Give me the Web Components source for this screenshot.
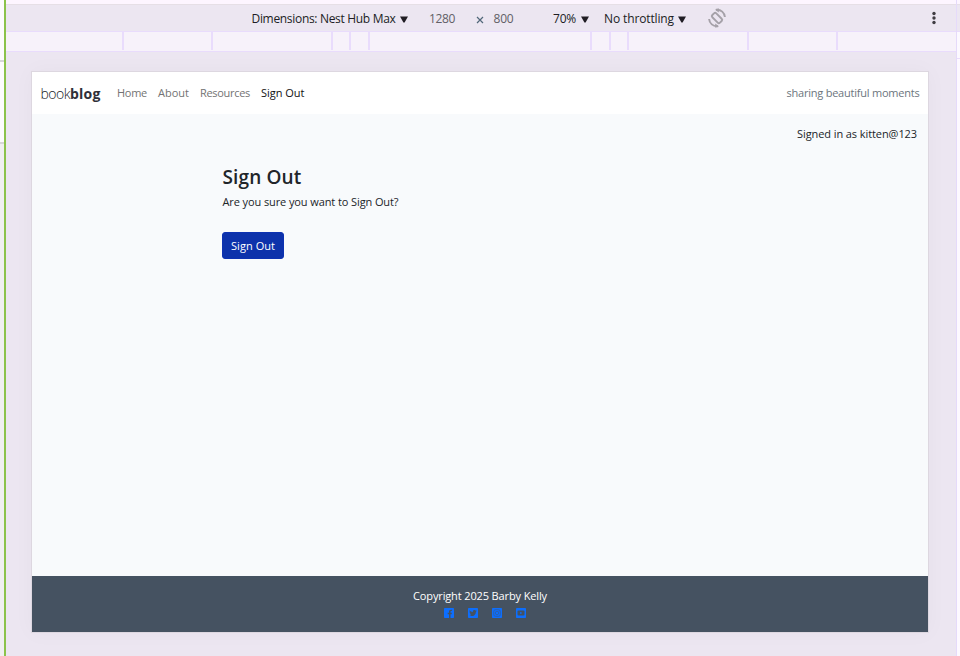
<!DOCTYPE html>
<html lang="en">
<head>
<meta charset="utf-8">
<title>Book blog</title>
<style>html,body{margin:0;height:100%;overflow:hidden}</style>
</head>
<body>
<device-preview></device-preview>
<script>
const define = (name, html, ready) => customElements.define(name, class extends HTMLElement {
  connectedCallback() {
    if (!this.shadowRoot) {
      const t = document.createElement('template');
      t.innerHTML = html;
      this.attachShadow({mode: 'open'}).append(t.content.cloneNode(true));
    }
    if (ready) ready(this);
  }
});

/* A single line of text, tracked so that it fills the width in "w". */
define('fit-text', `
<style>
:host{display:block;flex:none;white-space:nowrap;line-height:16px}
span{display:inline-block;white-space:nowrap}
</style><span><slot></slot></span>`, el => {
  const span = el.shadowRoot.querySelector('span');
  const w = +el.getAttribute('w');
  el.style.width = w + 'px';
  span.style.letterSpacing = '0px';
  const n = el.textContent.length;
  span.style.letterSpacing = ((w - span.getBoundingClientRect().width) / n) + 'px';
});

define('drop-arrow', `
<style>:host{display:block;flex:none;width:8px;height:7px;margin-top:1px}svg{display:block}</style>
<svg width="8" height="7"><path d="M0 .5h8L4.600 6.500H3.400z" fill="#201d24"/></svg>`);

define('device-toolbar', `
<style>
:host{display:flex;align-items:center;box-sizing:border-box;height:28px;padding:1px 0 0 245.500px;border:solid #e6dfe6;border-width:1px 0 0;border-bottom:1px solid #e9dcfc;background:#ece6f1;color:#201d24;font:12px "Open Sans","Noto Sans",sans-serif}
.dim{color:#625f66}
svg{flex:none;display:block}
</style>
<fit-text w="144">Dimensions: Nest Hub Max</fit-text>
<drop-arrow style="margin-left:4.500px"></drop-arrow>
<fit-text class="dim" w="26" style="margin-left:21px">1280</fit-text>
<svg width="8" height="8" style="margin:3px 0 0 21px" viewBox="0 0 8 8"><path d="M1 1l6 6M7 1L1 7" stroke="#526779" stroke-width="1.200"/></svg>
<fit-text class="dim" w="20" style="margin-left:9.500px">800</fit-text>
<fit-text w="23" style="margin-left:39.500px">70%</fit-text>
<drop-arrow style="margin-left:5px"></drop-arrow>
<fit-text w="70" style="margin-left:15px">No throttling</fit-text>
<drop-arrow style="margin-left:4px"></drop-arrow>
<svg width="20" height="20" viewBox="0 0 20 20" style="margin:-2px 0 0 21px" fill="none" stroke="#a5a1a8" stroke-width="1.900"><rect x="7.200" y="4.600" width="5.600" height="10.800" rx="1.600" transform="rotate(-45 10 10)"/><path d="M9 1.800c5-.6 8.600 3 8.900 7.200M11 18.200C6 18.800 2.400 15.200 2.100 11"/><path d="M8 1.700L11.800.2v4.400zM12 18.300L8.200 19.800v-4.400z" fill="#a5a1a8" stroke="none"/></svg>
<svg width="4" height="14" viewBox="0 0 4 14" style="margin:-1px 0 0 205px" fill="#3f3c42"><circle cx="2" cy="2.500" r="1.700"/><circle cx="2" cy="7" r="1.700"/><circle cx="2" cy="11.500" r="1.700"/></svg>`);

define('media-ruler', `
<style>
:host{display:grid;grid-template-columns:118px 89px 120px 18px 19px 222px 19px 18px 120px 89px 1fr;box-sizing:border-box;height:20px;background:#f7f2fa;border-bottom:1px solid #e9dcfc}
i{height:18px;box-sizing:border-box;border-right:2px solid #e9dcfc}
i:last-child{border:0}
</style><i></i><i></i><i></i><i></i><i></i><i></i><i></i><i></i><i></i><i></i><i></i>`);

define('side-strip', `
<style>
:host{display:grid;grid-template-rows:62px 82px 1fr;background:#fcfcfc;border-right:2px solid #8bc34a}
i{box-sizing:border-box;border-bottom:2px solid #d7d6d8}
i:last-child{background:#f0f0f0;border:0}
</style><i></i><i></i><i></i>`);

define('site-nav', `
<style>
:host{display:flex;align-items:center;height:42px;box-sizing:border-box;padding:0 8.500px 0 8.500px;background:#fff;color:#737373;font-size:11px}
.brand{display:flex;color:#212529;font-size:14px;margin:1px 16.500px 0 0}
.light{font-family:"Open Sans Light","Open Sans",sans-serif;font-weight:300}
.on{color:#111}.end{margin-left:auto;color:#6c757d}
.blog{font-weight:700;color:#303038}
</style>
<div class="brand"><fit-text class="light" w="29.500">book</fit-text><fit-text class="blog" w="30.500">blog</fit-text></div>
<fit-text w="30">Home</fit-text><fit-text w="31" style="margin-left:11px">About</fit-text><fit-text w="50" style="margin-left:11px">Resources</fit-text><fit-text class="on" w="43.500" style="margin-left:11px">Sign Out</fit-text>
<fit-text class="end" w="133">sharing beautiful moments</fit-text>`);

define('action-button', `
<style>
:host{display:block;margin:22px 0 0 -.5px}
button{display:flex;align-items:center;justify-content:center;box-sizing:border-box;width:62px;height:27px;padding:1px 0 0;border:1px solid #0d32b2;border-radius:3px;background:#0d32ab;color:#fff;font:inherit}
</style><button><slot></slot></button>`);

define('site-main', `
<style>
:host{display:flex;flex-direction:column;flex:1;background:#f8fafc;color:#212529;font-size:11px}
.user{margin:12px 11px 0 auto}
section{display:flex;flex-direction:column;align-items:flex-start;margin:23px 0 0 190.500px}
h1{margin:0;font-size:19px;font-weight:600}
h1 fit-text{line-height:24px}
.ask{margin-top:5px}
</style>
<fit-text class="user" w="120">Signed in as kitten@123</fit-text>
<section>
<h1><fit-text w="79">Sign Out</fit-text></h1>
<fit-text class="ask" w="176">Are you sure you want to Sign Out?</fit-text>
<action-button><fit-text w="44">Sign Out</fit-text></action-button>
</section>`);

define('social-icon', `
<style>:host{display:block;width:10px;height:10px}svg{display:block}</style><svg width="10" height="10" viewBox="0 0 10 10"></svg>`, el => {
  const marks = {
    facebook: '<path d="M5 10V6.200H3.700V4.700H5V3.700C5 2.300 5.800 1.600 7.900 1.800V3.100C6.800 3 6.500 3.200 6.500 3.900V4.700H7.900L7.600 6.200H6.500V10z"/>',
    twitter: '<path d="M1.600 2.300C2.500 3.300 3.500 3.800 4.900 3.900C4.700 1.900 6.600 1.600 7.400 2.500L8.600 2.200L8 3.200L8.700 3.100L7.900 3.900C7.800 7.500 4.400 9 1.400 7.500C2.300 7.500 2.900 7.300 3.400 6.900C2.600 6.800 2.200 6.400 2 5.800L2.700 5.700C1.900 5.300 1.500 4.800 1.500 4.200L2.200 4.300C1.500 3.800 1.300 3 1.600 2.300z"/>',
    instagram: '<g fill="none" stroke="#455261" stroke-width=".7" opacity=".65"><rect x="1.700" y="1.700" width="6.600" height="6.600" rx="1.700"/><circle cx="5" cy="5" r="1.700"/><path d="M6.700 3h.6"/></g>',
    youtube: '<rect x="1.500" y="2.500" width="7" height="5" rx="1.100"/><path d="M4.200 3.700L6.300 5L4.200 6.300z" fill="#0d6efd"/>'
  };
  el.shadowRoot.querySelector('svg').innerHTML = '<rect width="10" height="10" rx=".8" fill="#0d6efd"/><g fill="#455261">' + marks[el.getAttribute('kind')] + '</g>';
});

define('site-footer', `
<style>
:host{display:flex;flex-direction:column;align-items:center;box-sizing:border-box;height:56px;padding-top:12px;background:#455261;color:#fff;font-size:11px}
nav{display:flex;gap:14px;margin:4px 0 0 10px}
</style>
<fit-text w="134">Copyright 2025 Barby Kelly</fit-text>
<nav><social-icon kind="facebook"></social-icon><social-icon kind="twitter"></social-icon><social-icon kind="instagram"></social-icon><social-icon kind="youtube"></social-icon></nav>`);

define('blog-page', `
<style>
:host{display:flex;flex-direction:column;box-sizing:border-box;width:898px;height:562px;margin:19px 0 0 25px;border:1px solid #ddd7e0;box-shadow:0 0 20px rgba(60,40,60,.03);font-family:"Open Sans","Noto Sans",sans-serif}
</style><site-nav></site-nav><site-main></site-main><site-footer></site-footer>`);

define('device-preview', `
<style>
:host{display:grid;grid-template-columns:6px 950px 4px;width:960px;height:656px;overflow:hidden;background:#ece6f1}
main{border-top:4px solid #fdf5ff}
aside{box-sizing:border-box;border-left:1px solid #e5dafa;display:grid;grid-template-rows:4px 27px 28px 1fr}
aside i:nth-child(1){background:#fdf5ff}
aside i:nth-child(2){border-top:1px solid #e6dfe6}
aside i:nth-child(3){background:#fcf9ff;border:solid #e9dcfc;border-width:1px 0}
aside i:nth-child(4){background:#fdf9ff}
</style>
<side-strip></side-strip>
<main><device-toolbar></device-toolbar><media-ruler></media-ruler><blog-page></blog-page></main>
<aside><i></i><i></i><i></i><i></i></aside>`);
</script>
</body>
</html>
